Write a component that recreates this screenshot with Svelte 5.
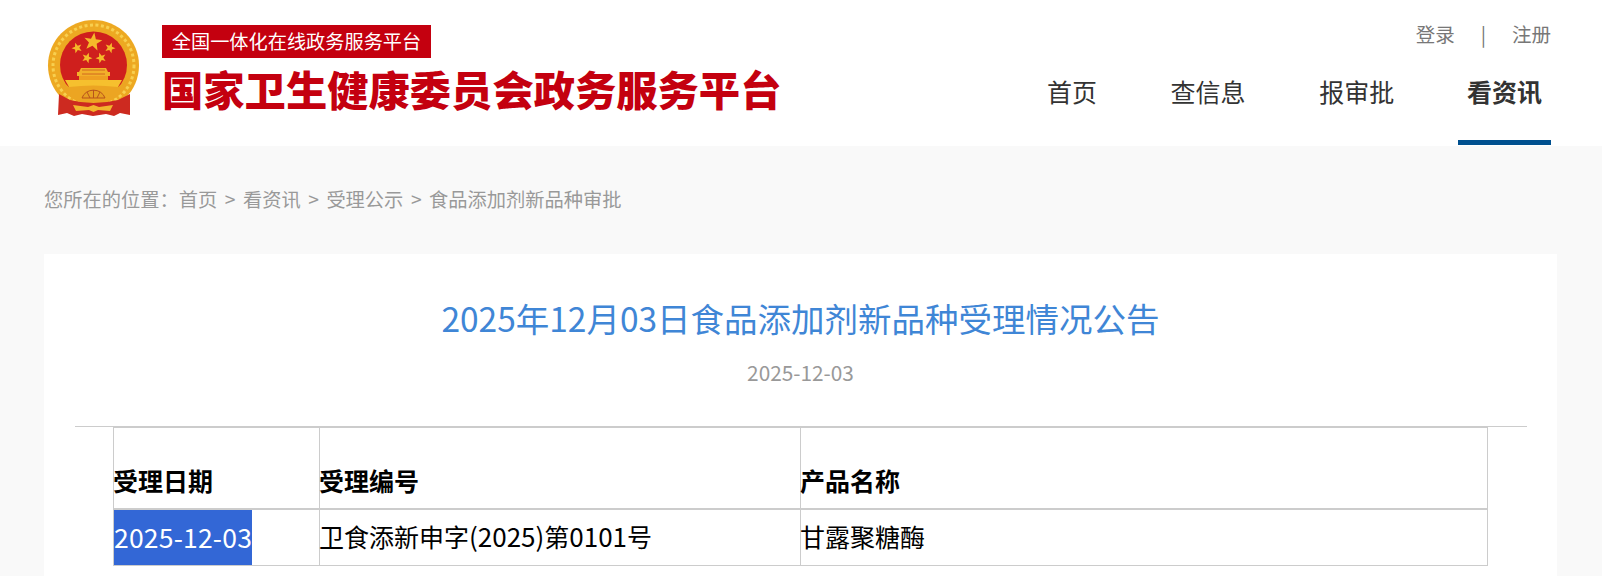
<script>
  const nav = [
    { label: '首页', active: false },
    { label: '查信息', active: false },
    { label: '报审批', active: false },
    { label: '看资讯', active: true }
  ];
  const crumbs = ['首页', '看资讯', '受理公示', '食品添加剂新品种审批'];
  const stars = [
    { x: 47, y: 24, s: 0.95, r: 8 },
    { x: 31, y: 30, s: 0.55, r: -20 },
    { x: 41, y: 40, s: 0.55, r: 20 },
    { x: 55, y: 40, s: 0.55, r: -20 },
    { x: 64, y: 30, s: 0.55, r: 20 }
  ];
  const star = 'M0-10 2.6-3.2 9.5-3.1 4.1 1.2 5.9 8.1 0 4 -5.9 8.1 -4.1 1.2 -9.5-3.1 -2.6-3.2Z';
</script>

<div class="page">
  <header class="header">
    <div class="brand">
      <svg class="emblem" viewBox="0 0 96 100" aria-hidden="true">
        <circle cx="47.5" cy="47.5" r="45.5" fill="#eda922" />
        <circle cx="47.5" cy="47.5" r="40.5" fill="none" stroke="#f8cf4f" stroke-width="3" stroke-dasharray="3 2.5" />
        <circle cx="47.5" cy="47" r="33.5" fill="#cf1f1d" />
        <g fill="#f5b92a">
          {#each stars as s}
            <path d={star} transform="translate({s.x} {s.y}) scale({s.s}) rotate({s.r})" />
          {/each}
        </g>
        <path d="M35 50 H60 L62 54 H64 V58 H31 V54 H33Z" fill="#f2b02a" />
        <path d="M36 52 H59 M36 56 H59" stroke="#c9571c" stroke-width="0.8" />
        <path d="M33 58 H62 V62 H33Z" fill="#ee9f22" />
        <path d="M19 62 H76 L72 69 H23Z" fill="#f6c02e" />
        <path d="M12 60 L23 69 Q47 66 72 69 L83 60 Q77 84 47.5 86 Q18 84 12 60Z" fill="#eca522" />
        <path d="M36 80 A12 11 0 0 1 59 80Z" fill="#e7a021" stroke="#b8521c" stroke-width="1" />
        <path d="M47.5 72 V80 M41 74 L44 80 M54 74 L51 80" stroke="#b8521c" stroke-width="1" />
        <path d="M13 76 L24 82 Q47 88 72 82 L84 76 L84 97 L74 95 L68 98 L60 96 L47 98 L36 96 L28 98 L21 95 L12 97Z" fill="#cd2a20" />
        <path d="M27 87 L42 89 L47.5 87 L53 89 L67 87 L64 93 L52 92 L47.5 94 L43 92 L30 93Z" fill="#f2b52d" />
      </svg>
      <div class="titles">
        <div class="tag">全国一体化在线政务服务平台</div>
        <div class="site">国家卫生健康委员会政务服务平台</div>
      </div>
    </div>
    <div class="side">
      <div class="account">
        <a href="#login">登录</a>
        <span class="sep">|</span>
        <a href="#register">注册</a>
      </div>
      <nav class="nav">
        {#each nav as item}
          <a href="#nav" class="nav-item" class:active={item.active}>{item.label}</a>
        {/each}
      </nav>
    </div>
  </header>

  <div class="crumbs">
    <span>您所在的位置：</span>{#each crumbs as c, i}{#if i > 0}<span class="arrow">&gt;</span>{/if}<a href="#crumb">{c}</a>{/each}
  </div>

  <main class="card">
    <h1>2025年12月03日食品添加剂新品种受理情况公告</h1>
    <div class="date">2025-12-03</div>
    <div class="body">
      <table>
        <colgroup>
          <col class="c1" /><col class="c2" /><col class="c3" />
        </colgroup>
        <thead>
          <tr><th>受理日期</th><th>受理编号</th><th>产品名称</th></tr>
        </thead>
        <tbody>
          <tr>
            <td><span class="selected">2025-12-03</span></td>
            <td>卫食添新申字<span class="num">(2025)</span>第<span class="num">0101</span>号</td>
            <td>甘露聚糖酶</td>
          </tr>
        </tbody>
      </table>
    </div>
  </main>
</div>

<style>
  :global(body) {
    margin: 0;
    background: #f9f9f9;
    font-family: "Noto Sans CJK SC", "Noto Sans", sans-serif;
  }
  a { color: inherit; text-decoration: none; }
  .page { height: 576px; overflow: hidden; background: #f9f9f9; }

  .header {
    height: 146px;
    background: #fff;
    display: flex;
    justify-content: space-between;
    padding: 0 51px 0 44px;
    box-sizing: border-box;
  }
  .brand { display: flex; align-items: flex-start; }
  .emblem { width: 96px; height: 100px; margin: 18px 0 0 2px; }
  .titles { margin: 25px 0 0 20px; }
  .tag {
    width: 269px;
    height: 33px;
    line-height: 33px;
    background: #c4000f;
    color: #fff;
    font-size: 19.2px;
    text-align: center;
  }
  .site {
    margin-top: 5px;
    font-size: 41.3px;
    line-height: 50px;
    font-weight: 900;
    color: #c4000f;
    white-space: nowrap;
  }
  .side { display: flex; flex-direction: column; align-items: flex-end; }
  .account {
    margin-top: 20px;
    display: flex;
    gap: 26px;
    font-size: 19.5px;
    line-height: 28px;
    color: #777;
  }
  .nav { display: flex; gap: 53.7px; margin-top: 20px; }
  .nav-item {
    display: block;
    height: 77px;
    padding: 0 10px;
    box-sizing: border-box;
    font-size: 25px;
    line-height: 46px;
    color: #333;
    white-space: nowrap;
  }
  .nav-item:last-child { padding: 0 9px; }
  .active { font-weight: 700; border-bottom: 5px solid #00508f; }

  .crumbs {
    padding: 39px 0 0 44px;
    height: 68px;
    box-sizing: border-box;
    font-size: 19.25px;
    line-height: 28px;
    color: #999;
    white-space: nowrap;
  }
  .arrow { margin: 0 7.5px; }

  .card {
    margin: 40px 45px 0 44px;
    background: #fff;
    padding-top: 44px;
    height: 400px;
  }
  h1 {
    margin: 0;
    font-size: 33.5px;
    line-height: 40px;
    font-weight: 400;
    color: #3f86d6;
    text-align: center;
  }
  .date {
    margin-top: 20px;
    font-size: 20.8px;
    line-height: 28px;
    color: #999;
    text-align: center;
  }
  .body {
    margin: 40px 30px 0 31px;
    border-top: 1px solid #ccc;
  }
  table {
    width: 1374px;
    margin: 0 0 0 38px;
    table-layout: fixed;
    border-collapse: collapse;
    color: #000;
    font-size: 25px;
    line-height: 53px;
  }
  .c1 { width: 206px; }
  .c2 { width: 481px; }
  .c3 { width: 687px; }
  th, td {
    padding: 0 0 2px;
    text-align: left;
    border: 1px solid #ccc;
    white-space: nowrap;
    text-indent: -1px;
  }
  th { padding: 26px 0 1px; font-weight: 700; border-bottom: 2px solid #ccc; }
  td:first-child { padding: 0; text-indent: 0; }
  .selected {
    display: inline-block;
    background: #3367d6;
    color: #fff;
    vertical-align: top;
    padding-bottom: 2px;
    font-size: 26.5px;
    letter-spacing: 0.2px;
  }
  .num { font-size: 26px; line-height: 0; }
</style>
